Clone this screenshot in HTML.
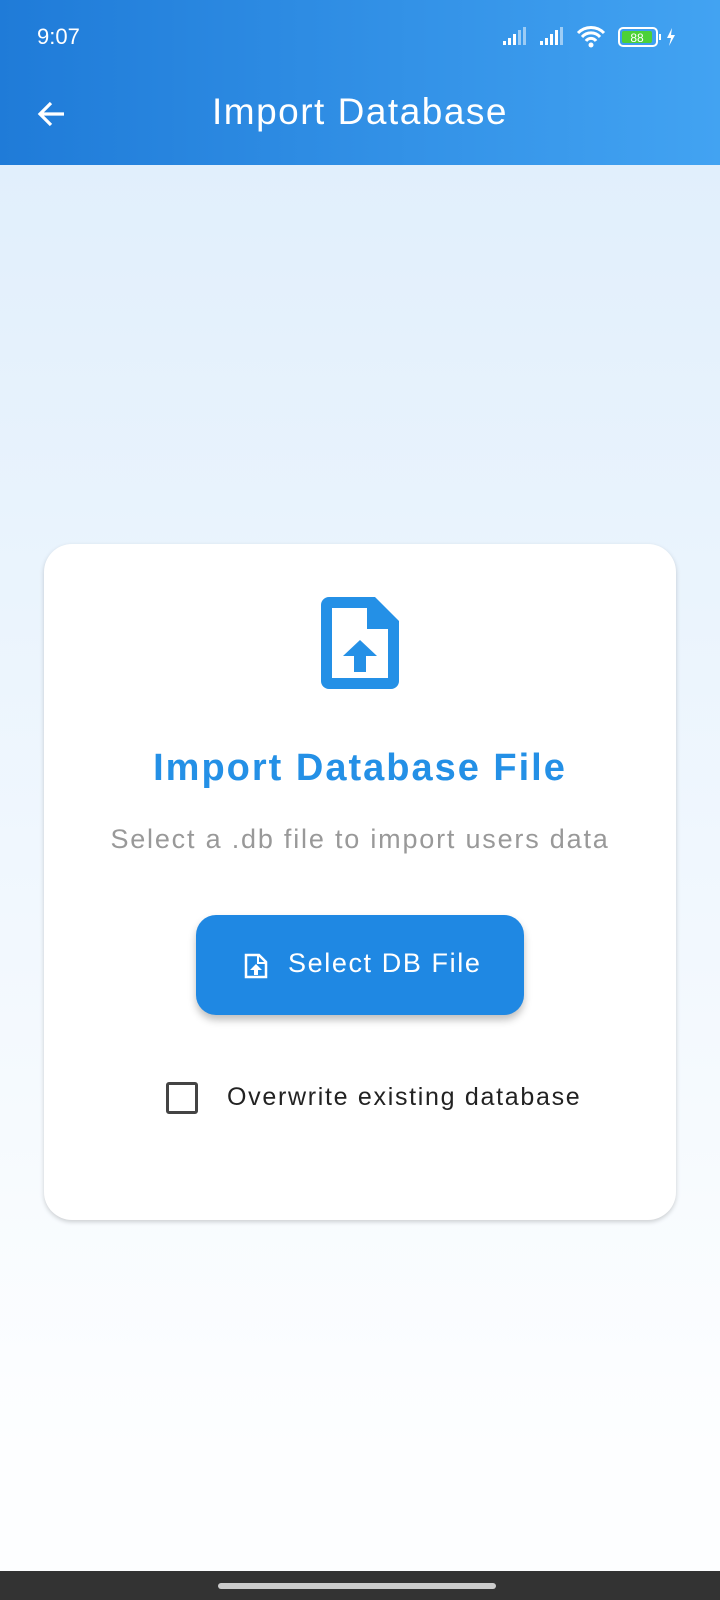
<!DOCTYPE html>
<html><head><meta charset="utf-8"><style>
*{margin:0;padding:0;box-sizing:border-box}
body{width:720px;height:1600px;overflow:hidden;font-family:"Liberation Sans","DejaVu Sans",sans-serif;background:linear-gradient(#e1effc 165px,#fdfeff 1450px);position:relative}
.hdr{position:absolute;left:0;top:0;width:720px;height:165px;background:linear-gradient(90deg,#1f7bd8,#42a3f2);color:#fff}
.time{position:absolute;left:37px;top:24px;font-size:22px}
.ttl{position:absolute;left:0;width:720px;text-align:center;top:91px;font-size:37px;letter-spacing:1.5px}
.card{position:absolute;left:44px;top:544px;width:632px;height:676px;background:#fff;border-radius:28px;box-shadow:0 2px 5px rgba(0,0,0,.18)}
.h{position:absolute;left:0;width:632px;text-align:center;top:203px;font-size:38px;font-weight:bold;color:#2490e6;letter-spacing:2px}
.s{position:absolute;left:0;width:632px;text-align:center;top:280px;font-size:27px;color:#999;letter-spacing:1.8px}
.btn{position:absolute;left:152px;top:371px;width:328px;height:100px;background:#1f88e3;border-radius:20px;box-shadow:0 5px 8px rgba(0,0,0,.25);color:#fff;font-size:27px;letter-spacing:1.6px}
.btn span{position:absolute;left:92px;top:33px}
.cb{position:absolute;left:122px;top:538px;width:32px;height:32px;border:3.5px solid #444;border-radius:3px}
.lbl{position:absolute;left:183px;top:539px;font-size:25px;color:#222;letter-spacing:1.7px}
.nav{position:absolute;left:0;top:1571px;width:720px;height:29px;background:#333}
.nav div{position:absolute;left:218px;top:12px;width:278px;height:6px;border-radius:3px;background:#ccc}
</style></head><body>
<div class="hdr">
<div class="time">9:07</div>
<svg style="position:absolute;left:500px;top:24px" width="190" height="26" viewBox="0 0 190 26">
<g fill="#fff"><rect x="3" y="17" width="3" height="4"/><rect x="8" y="14" width="3" height="7"/><rect x="13" y="10" width="3" height="11"/><rect x="18" y="6" width="3" height="15" opacity=".5"/><rect x="23" y="3" width="3" height="18" opacity=".5"/>
<rect x="40" y="17" width="3" height="4"/><rect x="45" y="14" width="3" height="7"/><rect x="50" y="10" width="3" height="11"/><rect x="55" y="6" width="3" height="15"/><rect x="60" y="3" width="3" height="18" opacity=".5"/></g>
<path d="M78 9a18 18 0 0 1 26 0M82 13a12 12 0 0 1 18 0M86 17a6 6 0 0 1 10 0" stroke="#fff" stroke-width="3" fill="none"/><circle cx="91" cy="21" r="2.5" fill="#fff"/>
<rect x="119" y="4" width="38" height="18" rx="4" fill="none" stroke="#fff" stroke-width="2"/><rect x="122" y="7" width="30" height="12" rx="2" fill="#4cd137"/><text x="137" y="18" font-size="12" fill="#fff" text-anchor="middle" font-family="Liberation Sans">88</text><rect x="159" y="10" width="2" height="6" fill="#fff"/>
<path d="M172 4l-5 10h4l-2 8 6-11h-4z" fill="#fff"/></svg>
<svg style="position:absolute;left:36px;top:98px" width="32" height="32" viewBox="0 0 32 32"><path d="M28 16H5M15 5L4 16l11 11" stroke="#fff" stroke-width="3.2" fill="none"/></svg>
<div class="ttl">Import Database</div>
</div>
<div class="card">
<svg style="position:absolute;left:277px;top:53px" width="78" height="92" viewBox="0 0 78 92"><path d="M8 0h46l24 24v60a8 8 0 0 1-8 8H8a8 8 0 0 1-8-8V8a8 8 0 0 1 8-8z" fill="#2490e6"/><path d="M11 11h35v21h21v49H11z" fill="#fff"/><path d="M39 43l-17 16h11v16h12V59h11z" fill="#2490e6"/></svg>
<div class="h">Import Database File</div>
<div class="s">Select a .db file to import users data</div>
<div class="btn"><svg style="position:absolute;left:48px;top:38px" width="24" height="26" viewBox="0 0 24 26"><path d="M2 2h13l7 7v15H2z" fill="none" stroke="#fff" stroke-width="2.5"/><path d="M14 2v8h8" fill="none" stroke="#fff" stroke-width="2"/><path d="M12 11l-6 6h4v5h4v-5h4z" fill="#fff"/></svg><span>Select DB File</span></div>
<div class="cb"></div>
<div class="lbl">Overwrite existing database</div>
</div>
<div class="nav"><div></div></div>
</body></html>
